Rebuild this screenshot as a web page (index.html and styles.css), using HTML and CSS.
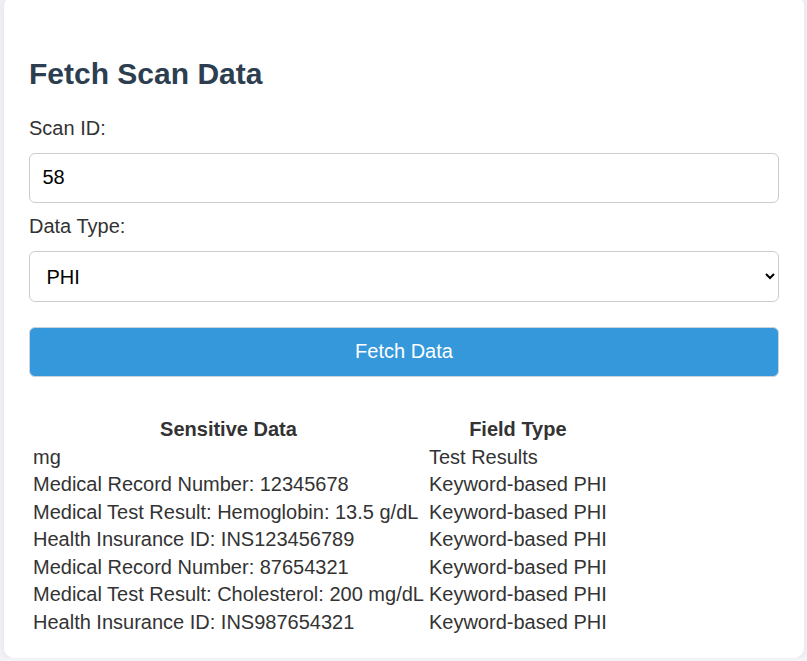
FILE: index.html
```html
<!DOCTYPE html>
<html lang="en">
<head>
<meta charset="utf-8">
<title>Fetch Scan Data</title>
<link rel="stylesheet" href="styles.css">
</head>
<body>
<div class="card">
  <h2 class="title">Fetch Scan Data</h2>
  <label class="label" for="scanId">Scan ID:</label>
  <input class="field" id="scanId" type="text" value="58">
  <label class="label" for="dataType">Data Type:</label>
  <select class="field select" id="dataType">
    <option>PHI</option>
    <option>PII</option>
  </select>
  <button class="btn" type="button">Fetch Data</button>
  <table class="results">
    <thead>
      <tr><th>Sensitive Data</th><th>Field Type</th></tr>
    </thead>
    <tbody>
      <tr><td>mg</td><td>Test Results</td></tr>
      <tr><td>Medical Record Number: 12345678</td><td>Keyword-based PHI</td></tr>
      <tr><td>Medical Test Result: Hemoglobin: 13.5 g/dL</td><td>Keyword-based PHI</td></tr>
      <tr><td>Health Insurance ID: INS123456789</td><td>Keyword-based PHI</td></tr>
      <tr><td>Medical Record Number: 87654321</td><td>Keyword-based PHI</td></tr>
      <tr><td>Medical Test Result: Cholesterol: 200 mg/dL</td><td>Keyword-based PHI</td></tr>
      <tr><td>Health Insurance ID: INS987654321</td><td>Keyword-based PHI</td></tr>
    </tbody>
  </table>
</div>
</body>
</html>
```

FILE: styles.css
```css
html, body {
  margin: 0;
  padding: 0;
}
body {
  background: #f2f2f7;
  font-family: "Liberation Sans", Arial, sans-serif;
  font-size: 20px;
  color: #333;
  overflow: hidden;
}
.card {
  box-sizing: border-box;
  width: 800px;
  margin: -4px 0 0 4px;
  padding: 25px 25px 21px 25px;
  background: #fff;
  border-radius: 10px;
  box-shadow: 0 0 8px rgba(0, 0, 0, 0.08);
}
.title {
  margin: 36px 0 25px 0;
  font-size: 30px;
  font-weight: bold;
  line-height: 34.5px;
  color: #2c3e50;
}
.label {
  display: block;
  line-height: 23px;
  margin-bottom: 13px;
  color: #333;
}
.field {
  display: block;
  box-sizing: border-box;
  width: 100%;
  height: 50px;
  padding: 12px 12.5px;
  margin: 0 0 12.5px 0;
  border: 1px solid #ccc;
  border-radius: 6px;
  font-family: "Liberation Sans", Arial, sans-serif;
  font-size: 20px;
  color: #000;
  background: #fff;
}
.select {
  height: 51px;
  margin-bottom: 25px;
}
.btn {
  display: block;
  box-sizing: border-box;
  width: 100%;
  height: 50px;
  margin: 0;
  padding-bottom: 2px;
  border: 1px solid #c9d3da;
  border-radius: 6px;
  background: #3498db;
  color: #fff;
  font-family: "Liberation Sans", Arial, sans-serif;
  font-size: 20px;
}
.results {
  margin-top: 37px;
  border-spacing: 3px;
  font-size: 20px;
  line-height: 22.5px;
  color: #333;
}
.results th,
.results td {
  padding: 1px;
}
.results th {
  font-weight: bold;
  text-align: center;
}
.results td {
  text-align: left;
}
```
